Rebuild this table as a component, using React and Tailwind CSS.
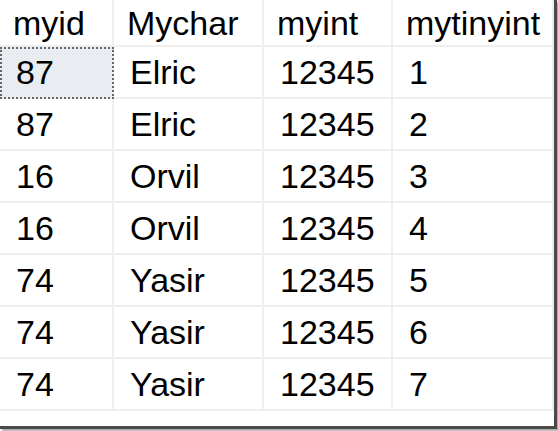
import React from 'react';

const columns = ['myid', 'Mychar', 'myint', 'mytinyint'];

const rows = [
  ['87', 'Elric', '12345', '1'],
  ['87', 'Elric', '12345', '2'],
  ['16', 'Orvil', '12345', '3'],
  ['16', 'Orvil', '12345', '4'],
  ['74', 'Yasir', '12345', '5'],
  ['74', 'Yasir', '12345', '6'],
  ['74', 'Yasir', '12345', '7'],
];

const GRID = 'grid grid-cols-[114px_150px_129px_1fr]';

export default function App() {
  return (
    <div className="w-[558px] h-[431px] bg-white overflow-hidden">
      {/* result grid with drop shadow edge */}
      <div className="w-[557px] h-[429px] bg-white border-r-[3px] border-b-[3px] border-[#4a4a4a] shadow-[2px_2px_2px_rgba(0,0,0,0.35)] font-['Liberation_Sans',Arial,sans-serif] text-[34px] text-black leading-none">
        <div className={GRID}>
          {columns.map((c) => (
            <div
              key={c}
              className="h-[47px] flex items-center pl-[13px] border-r-2 border-b-2 border-[#efefef]"
            >
              {c}
            </div>
          ))}
        </div>
        {rows.map((row, i) => (
          <div key={i} className={GRID}>
            {row.map((v, j) => {
              const focused = i === 0 && j === 0;
              return (
                <div
                  key={j}
                  className={`h-[52px] flex items-center pl-[16px] border-r-2 border-b-2 border-[#efefef] ${
                    focused ? 'bg-[#e9edf2] outline-2 outline-dotted outline-[#666] -outline-offset-2' : ''
                  }`}
                >
                  {v}
                </div>
              );
            })}
          </div>
        ))}
      </div>
    </div>
  );
}
